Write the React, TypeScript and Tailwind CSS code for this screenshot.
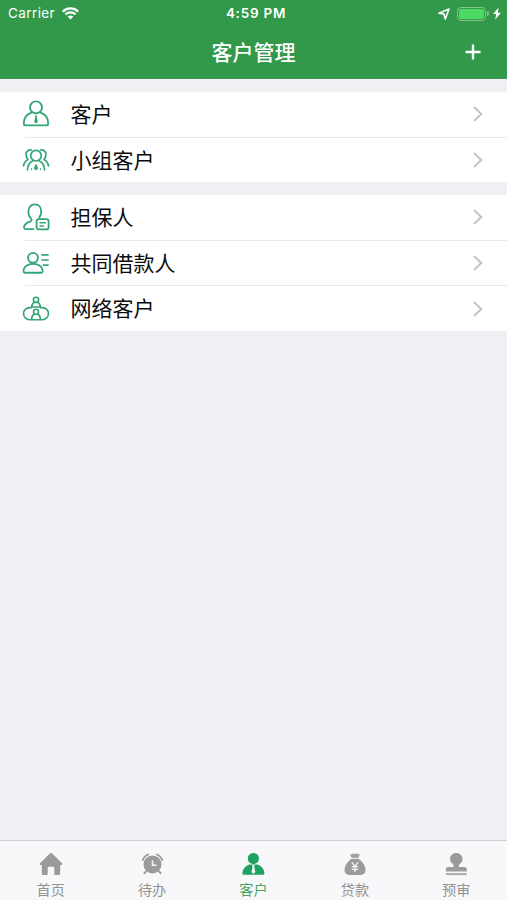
import React from 'react';

interface IconProps {
  className?: string;
}

interface MenuItem {
  label: string;
  icon: React.FC<IconProps>;
}

interface TabItem extends MenuItem {
  active?: boolean;
}

const lineProps = {
  viewBox: '0 0 28 28',
  fill: 'none',
  stroke: 'currentColor',
  strokeWidth: 1.9,
  strokeLinecap: 'round' as const,
  strokeLinejoin: 'round' as const,
};

const CustomerIcon: React.FC<IconProps> = ({ className }) => (
  <svg className={className} {...lineProps}>
    <circle cx="14" cy="7.4" r="6" />
    <path d="M9.7 12.4C5 14.2 1.8 18.2 1.8 23.2c0 1.5.5 2.2 1.8 2.2h20.8c1.3 0 1.8-.7 1.8-2.2 0-5-3.2-9-7.9-10.8" />
    <path d="M12.8 15.6h2.4l-.4 1.8 1.1 4.4-1.9 1.8-1.9-1.8 1.1-4.4z" fill="currentColor" stroke="none" />
  </svg>
);

const GroupIcon: React.FC<IconProps> = ({ className }) => (
  <svg className={className} {...lineProps} strokeWidth={1.7}>
    <circle cx="14" cy="9.7" r="5.3" />
    <path d="M11 14.8C7.6 16.3 5.7 19.3 5.5 23.8M17 14.8c3.4 1.5 5.3 4.5 5.5 9" />
    <path d="M9.2 3.9C6 3.7 4 5.7 4 8.5c0 2 .7 3.6 2.1 4.9C3.5 15 1.8 17.2 1.5 20" />
    <path d="M18.8 3.9C22 3.7 24 5.7 24 8.5c0 2-.7 3.6-2.1 4.9 2.6 1.6 4.3 3.8 4.6 6.6" />
    <path d="M14 17.8l1 1.5 1.2 3.1-2.2 2-2.2-2 1.2-3.1z" fill="currentColor" stroke="none" />
    <path d="M9.6 22.6v1M18.4 22.6v1" strokeWidth="1" />
  </svg>
);

const GuarantorIcon: React.FC<IconProps> = ({ className }) => (
  <svg className={className} {...lineProps} strokeWidth={1.8}>
    <path d="M11.5 26.2H4.2c-2 0-2.7-1.7-1.9-3.3 1.2-2.4 3.6-4 6.2-4.6 1.3-.4 1.5-1.6.6-2.5C7.4 14.2 6.4 11.8 6.4 8.6c0-4.4 2.5-7.3 6.4-7.3s6.4 2.9 6.4 7.3c0 2.4-.8 4.5-2 6.1" />
    <rect x="14.6" y="16.2" width="12" height="10.2" rx="2.2" />
    <path d="M18 19.8h5.4M18 22.9h3.4" strokeWidth="1.5" />
  </svg>
);

const CoBorrowerIcon: React.FC<IconProps> = ({ className }) => (
  <svg className={className} {...lineProps}>
    <circle cx="11" cy="8.8" r="4.9" />
    <path d="M8.2 15.2c-3.9 1-6.7 3.9-6.7 7.1 0 1 .5 1.5 1.5 1.5h16.2c1 0 1.5-.5 1.5-1.5 0-3.2-2.8-6.1-6.7-7.1-1.9-.5-3.9-.5-5.8 0z" />
    <path d="M19.3 5.8h7.4M19.3 11h7.4M20.8 16.2h5.9" strokeWidth="1.7" strokeLinecap="butt" />
  </svg>
);

const NetworkIcon: React.FC<IconProps> = ({ className }) => (
  <svg className={className} {...lineProps} strokeWidth={1.6}>
    <circle cx="14" cy="4.8" r="2.6" />
    <path d="M12.2 7.4c-1.6.7-2.5 2.4-2.5 4.6h8.6c0-2.2-.9-3.9-2.5-4.6" />
    <path d="M9.5 12.6H7.8c-3.6 0-6.3 2.6-6.3 6s2.7 6.100 6.3 6.100h12.4c3.6 0 6.3-2.7 6.3-6.100s-2.7-6-6.3-6h-1.7" />
    <circle cx="14" cy="16.8" r="2.5" />
    <path d="M12.2 19.3c-1.6.7-2.5 2.4-2.5 4.8M15.8 19.3c1.6.7 2.5 2.4 2.5 4.8" />
  </svg>
);

const HomeIcon: React.FC<IconProps> = ({ className }) => (
  <svg className={className} viewBox="0 0 24 24" fill="currentColor">
    <path d="M12 1c.6 0 1 .2 1.5.7l9.3 9.2c.9.9.5 2.2-.8 2.2h-.8v8.3c0 1-.6 1.6-1.6 1.6h-4.3v-6.8c0-.9-.5-1.4-1.4-1.4h-3.8c-.9 0-1.4.5-1.4 1.4V23H4.4c-1 0-1.6-.6-1.6-1.6v-8.3H2c-1.3 0-1.7-1.3-.8-2.2l9.3-9.2c.5-.5.9-.7 1.5-.7z" />
  </svg>
);

const ClockIcon: React.FC<IconProps> = ({ className }) => (
  <svg className={className} viewBox="0 0 24 24" fill="none" stroke="currentColor" strokeLinecap="round">
    <circle cx="12.5" cy="12.4" r="9" fill="currentColor" stroke="none" />
    <path d="M2.7 8.2C3.5 5.6 5.4 3.5 8.1 2.5M22.3 8.2c-.8-2.6-2.7-4.7-5.4-5.7" strokeWidth="1.8" />
    <path d="M6.1 19.3l-1.7 1.9M18.9 19.3l1.7 1.9" strokeWidth="2" />
    <path d="M12.5 9v4.2h3.4" stroke="#f8f8fa" strokeWidth="1.6" />
  </svg>
);

const CustomerSolidIcon: React.FC<IconProps> = ({ className }) => (
  <svg className={className} viewBox="0 0 24 24" fill="currentColor">
    <circle cx="12.4" cy="6.5" r="5.6" />
    <path d="M8.2 12.5h8.4c4.2 1.5 6.6 4.9 6.8 8.8 0 1-.5 1.5-1.4 1.5H2.8c-.9 0-1.400-.5-1.400-1.500.2-3.9 2.600-7.300 6.800-8.800z" />
    <path d="M11.2 13h2.4l-.3 1.9 1 5.1-1.9 2-1.9-2 1-5.1z" fill="#f8f8fa" />
  </svg>
);

const LoanIcon: React.FC<IconProps> = ({ className }) => (
  <svg className={className} viewBox="0 0 24 24" fill="currentColor">
    <path d="M7 1.7l2.2.9L10.5 1 12 2.5 13.5 1l1.3 1.6 2.2-.9-1.7 4.1H8.7z" />
    <path d="M8.5 6.8h7c4.2 3 7 7.4 7 11.2 0 3.6-2.3 5-6 5h-9c-3.7 0-6-1.4-6-5 0-3.8 2.8-8.2 7-11.2z" />
    <path d="M8.8 10.3l3.2 4 3.2-4M12 14.3v5.6M8.8 14.7h6.4M8.8 17.3h6.4" fill="none" stroke="#f8f8fa" strokeWidth="1.3" />
  </svg>
);

const StampIcon: React.FC<IconProps> = ({ className }) => (
  <svg className={className} viewBox="0 0 24 24" fill="currentColor">
    <path d="M12.3 1c3.5 0 6.2 2.6 6.2 5.9 0 2.2-1 3.6-2.2 4.7-1 .9-1.6 1.9-1.4 3.4h5.6c1.4 0 2.2.8 2.2 2.2v2.300H1.9v-2.300c0-1.400.8-2.200 2.200-2.200h5.600c.2-1.500-.4-2.500-1.400-3.400-1.200-1.100-2.200-2.500-2.200-4.700C6.1 3.600 8.800 1 12.300 1z" />
    <path d="M1.9 21h20.800v2.200H1.9z" opacity="0.8" />
  </svg>
);

const sections: MenuItem[][] = [
  [
    { label: '客户', icon: CustomerIcon },
    { label: '小组客户', icon: GroupIcon },
  ],
  [
    { label: '担保人', icon: GuarantorIcon },
    { label: '共同借款人', icon: CoBorrowerIcon },
    { label: '网络客户', icon: NetworkIcon },
  ],
];

const tabs: TabItem[] = [
  { label: '首页', icon: HomeIcon },
  { label: '待办', icon: ClockIcon },
  { label: '客户', icon: CustomerSolidIcon, active: true },
  { label: '贷款', icon: LoanIcon },
  { label: '预审', icon: StampIcon },
];

const StatusBar: React.FC = () => (
  <div className="grid h-[27px] grid-cols-3 items-center pl-2 pr-[6px] text-white">
    <div className="flex items-center gap-[7px]">
      <span className="text-[13.5px] leading-none tracking-[0.4px]">Carrier</span>
      <svg className="h-[13px] w-[17px]" viewBox="0 0 17 13" fill="none" stroke="currentColor" strokeWidth="2.3">
        <path d="M.8 4.6C5 .4 12 .4 16.2 4.6M3.5 7.4c2.8-2.7 7.2-2.7 10 0" />
        <path d="M8.5 12.4L5.7 9.6c1.6-1.4 4-1.4 5.6 0z" fill="currentColor" stroke="none" />
      </svg>
    </div>
    <div className="pl-[3px] text-center text-[13.5px] font-semibold leading-none tracking-[0.75px]">4:59 PM</div>
    <div className="flex items-center justify-end">
      <svg className="mr-[7px] h-3 w-3" viewBox="0 0 12 12" fill="none" stroke="currentColor" strokeWidth="1.6" strokeLinejoin="round">
        <path d="M11 1L7.3 11 6 6 1 5.2z" />
      </svg>
      <div className="h-[14px] w-[29px] rounded-[4px] border border-[#83c58d] p-px">
        <div className="h-full rounded-[2px] bg-[#4cd964]" />
      </div>
      <div className="ml-px mr-[4px] h-[5px] w-[1.5px] rounded-r bg-[#83c58d]" />
      <svg className="h-[13px] w-[8px]" viewBox="0 0 8 13" fill="currentColor">
        <path d="M5.6.4L.1 7.1h3L2.3 12.6 7.9 5.7H4.8z" />
      </svg>
    </div>
  </div>
);

const Header: React.FC = () => (
  <header className="h-[79px] shrink-0 border-b border-[#498f53] bg-[#32994a]">
    <StatusBar />
    <div className="grid h-[50px] grid-cols-[1fr_auto_1fr] items-center text-white">
      <h1 className="col-start-2 text-[21px] font-medium leading-none">客户管理</h1>
      <button className="mr-[26px] justify-self-end" aria-label="添加">
        <svg className="h-4 w-4" viewBox="0 0 16 16" stroke="currentColor" strokeWidth="2.4">
          <path d="M8 .5v15M.5 8h15" />
        </svg>
      </button>
    </div>
  </header>
);

const MenuRow: React.FC<{ item: MenuItem; divider: boolean }> = ({ item, divider }) => {
  const Icon = item.icon;
  return (
    <li>
      {divider && <div className="ml-[25px] h-px bg-[#e9e9ec]" />}
      <div className="flex h-[44.6px] items-center pl-[21.5px] pr-6">
        <Icon className="h-7 w-7 shrink-0 text-[#33a677]" />
        <span className="ml-[21px] flex-1 pt-[0.5px] text-[21px] leading-none text-[#0c0c0c]">{item.label}</span>
        <svg className="h-4 w-[10px]" viewBox="0 0 10 16" fill="none" stroke="#c4c4c8" strokeWidth="2">
          <path d="M1 1l7.3 7L1 15" />
        </svg>
      </div>
    </li>
  );
};

const TabBar: React.FC = () => (
  <nav className="grid h-[60px] shrink-0 grid-cols-5 border-t border-[#cfcfd3] bg-[#f8f8fa]">
    {tabs.map(({ label, icon: Icon, active }) => (
      <button key={label} className={`flex flex-col items-center pt-[11px] ${active ? 'text-[#1fa362]' : 'text-[#9b9b9b]'}`}>
        <Icon className="h-6 w-6" />
        <span className={`mt-[7px] text-[14.2px] leading-none ${active ? 'text-[#47a460]' : 'text-[#929292]'}`}>{label}</span>
      </button>
    ))}
  </nav>
);

export default function App() {
  return (
    <div className="flex h-screen w-full flex-col overflow-hidden bg-[#efeff4] font-[Inter,'Noto_Sans_CJK_SC',sans-serif]">
      <Header />
      <main className="flex flex-1 flex-col gap-[13px] pt-[13px]">
        {sections.map((items, index) => (
          <ul key={index} className="bg-white">
            {items.map((item, i) => (
              <MenuRow key={item.label} item={item} divider={i > 0} />
            ))}
          </ul>
        ))}
      </main>
      <TabBar />
    </div>
  );
}
